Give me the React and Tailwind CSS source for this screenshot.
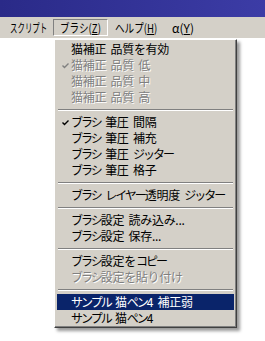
import React from 'react'

const items = [
  { t: '猫補正 品質を有効' },
  { t: '猫補正 品質 低', dis: true, check: true },
  { t: '猫補正 品質 中', dis: true },
  { t: '猫補正 品質 高', dis: true },
  'sep',
  { t: 'ブラシ 筆圧 間隔', check: true },
  { t: 'ブラシ 筆圧 補充' },
  { t: 'ブラシ 筆圧 ジッター' },
  { t: 'ブラシ 筆圧 格子' },
  'sep',
  { t: 'ブラシ レイヤー透明度 ジッター' },
  'sep',
  { t: 'ブラシ設定 読み込み...' },
  { t: 'ブラシ設定 保存...' },
  'sep',
  { t: 'ブラシ設定をコピー' },
  { t: 'ブラシ設定を貼り付け', dis: true },
  'sep',
  { t: 'サンプル 猫ペン4 補正弱', hl: true },
  { t: 'サンプル 猫ペン4' },
]

// katakana is narrow in the original UI font, so squeeze those runs
const Label = ({ text }) =>
  text.split(/([\u30A0-\u30FF]+)/).map((part, i) =>
    /[\u30A0-\u30FF]/.test(part)
      ? <span key={i} className='tracking-[-2px]'>{part}</span>
      : <span key={i}>{part}</span>
  )

const Check = ({ dis }) => (
  <svg width="7" height="7" viewBox="0 0 7 7" className="absolute left-[5px] top-[5px]">
    <path d="M0.5 3.5 L2.5 5.5 L6.5 1.5" fill="none" stroke={dis ? '#808080' : '#000'} strokeWidth="1.4" />
  </svg>
)

const MenuItem = ({ item }) => {
  if (item === 'sep') {
    return (
      <div className='h-[9px] flex flex-col justify-center px-[1px]'>
        <div className='h-px bg-[#808080]' />
        <div className='h-px bg-white' />
      </div>
    )
  }
  let cls = 'text-black'
  if (item.dis) cls = 'text-[#808080] [text-shadow:1px_1px_0_#fff]'
  if (item.hl) cls = 'text-white bg-[#0a246a]'
  return (
    <div className={`relative h-[16px] leading-[16px] pl-[14px] whitespace-nowrap tracking-[-0.3px] [word-spacing:2px] ${cls}`}>
      {item.check && <Check dis={item.dis} />}
      <Label text={item.t} />
    </div>
  )
}

export default function App() {
  return (
    <div className="relative w-[265px] h-[341px] bg-white overflow-hidden font-['Noto_Sans_CJK_JP',sans-serif] text-[12px]">
      <div className='h-[17px] bg-gradient-to-r from-[#2a2a88] to-[#3c3ca6]' />
      <div className='h-[21px] bg-[#d4d0c8] flex items-center pl-[10px] text-black whitespace-nowrap'>
        <div className='w-[43px] shrink-0 leading-[17px]'>
          <span className='inline-block origin-left scale-x-[0.62]'>スクリプト</span>
        </div>
        <div className='w-[55px] shrink-0 h-[17px] leading-[15px] pl-[6px] border border-t-[#808080] border-l-[#808080] border-b-white border-r-white'>
          <span className='inline-block origin-left scale-x-[0.8]'>ブラシ(<span className='underline'>Z</span>)</span>
        </div>
        <div className='w-[57px] shrink-0 pl-[7px] leading-[17px]'>
          <span className='inline-block origin-left scale-x-[0.8]'>ヘルプ(<span className='underline'>H</span>)</span>
        </div>
        <div className='shrink-0 pl-[7px] leading-[17px]'>
          α(<span className='underline'>Y</span>)
        </div>
      </div>

      <div className='absolute left-[54px] top-[39px] w-[183px] h-[289px] bg-[#d4d0c8] border border-t-white border-l-white border-r-[#404040] border-b-[#404040] shadow-[inset_-1px_-1px_0_#808080,3px_3px_3px_rgba(0,0,0,0.4)] py-[1px] px-[2px]'>
        {items.map((it, i) => (
          <MenuItem key={i} item={it} />
        ))}
      </div>
    </div>
  )
}
